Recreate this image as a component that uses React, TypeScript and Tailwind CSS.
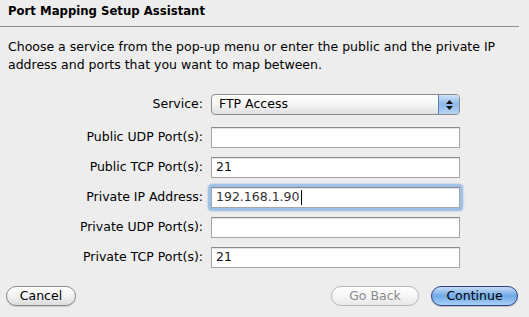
import React from 'react';

const font = {fontFamily: '"DejaVu Sans", "Lucida Grande", sans-serif'};

const Field: React.FC<{value?: string; focused?: boolean}> = ({value, focused}) => (
    <div className={focused ? "rounded-[3px] p-[2px] -m-[2px] bg-[#9cc0e8] shadow-[0_0_2px_1px_#8fb5e0]" : ""}>
        <div className={"h-[21px] bg-white border border-[#a5a5a5] border-t-[#8a8a8a] shadow-[inset_0_1px_0_#e4e4e4] flex items-center pl-[4px] text-[12.5px] " + (focused ? "text-[#333]" : "text-[#111]")}>
            {value}
            {focused && <span className="ml-px inline-block w-px h-[15px] bg-black"/>}
        </div>
    </div>
);

const Row: React.FC<{label: string; children: React.ReactNode; className?: string}> = ({label, children, className}) => (
    <div className={"flex items-center " + (className ?? "")}>
        <div className="w-[203px] text-right text-[12.5px] text-black">{label}</div>
        <div className="ml-[8px] w-[249px]">{children}</div>
    </div>
);

export default function App() {
    return (
        <div className="w-[529px] h-[317px] bg-[#ededed] overflow-hidden" style={font}>
            <div className="h-[26px] px-2 pt-[3px] text-[11.7px] font-bold text-black">Port Mapping Setup Assistant</div>
            <div className="h-px w-[519px] bg-[#8e8e8e]"/>
            <p className="mt-[11px] px-2 text-[12.5px] leading-[18px] text-black">
                Choose a service from the pop-up menu or enter the public and the private IP address and ports that you want to map between.
            </p>

            <div className="mt-[20px] flex flex-col">
                <Row label="Service:">
                    <div className="h-[21px] rounded-[4px] border border-[#8c8c8c] bg-gradient-to-b from-white via-[#f4f4f4] to-[#e0e0e0] flex items-stretch overflow-hidden">
                        <div className="flex-1 flex items-center pl-[7px] text-[12.5px] text-black">FTP Access</div>
                        <div className="w-[21px] border-l border-[#5a7fb8] bg-gradient-to-b from-[#cfe2f8] via-[#8db8ea] to-[#b8d6f6] flex flex-col items-center justify-center gap-[2px]">
                            <svg width="7" height="4" viewBox="0 0 7 4"><path d="M3.5 0L7 4H0z" fill="#111"/></svg>
                            <svg width="7" height="4" viewBox="0 0 7 4"><path d="M0 0h7L3.5 4z" fill="#111"/></svg>
                        </div>
                    </div>
                </Row>
                <Row label="Public UDP Port(s):" className="mt-[12px]"><Field/></Row>
                <Row label="Public TCP Port(s):" className="mt-[9px]"><Field value="21"/></Row>
                <Row label="Private IP Address:" className="mt-[9px]"><Field value="192.168.1.90" focused/></Row>
                <Row label="Private UDP Port(s):" className="mt-[9px]"><Field/></Row>
                <Row label="Private TCP Port(s):" className="mt-[9px]"><Field value="21"/></Row>
            </div>

            <div className="mt-[18px] flex items-center px-[6px]">
                <button className="w-[70px] h-[20px] rounded-full border border-[#8a8a8a] bg-gradient-to-b from-white via-[#f2f2f2] to-[#dcdcdc] text-[12.5px] text-black shadow-[0_1px_1px_rgba(0,0,0,0.15)]">Cancel</button>
                <div className="flex-1"/>
                <button className="w-[88px] h-[20px] rounded-full border border-[#b5b5b5] bg-gradient-to-b from-white via-[#f6f6f6] to-[#e8e8e8] text-[12.5px] text-[#8a8a8a]">Go Back</button>
                <button className="ml-[12px] mr-[5px] w-[87px] h-[20px] rounded-full border border-[#2b3f86] bg-gradient-to-b from-[#c7dcf5] via-[#6fa8e8] to-[#a9d1f8] text-[12.5px] text-black shadow-[0_1px_1px_rgba(0,0,0,0.2)]">Continue</button>
            </div>
        </div>
    );
}
